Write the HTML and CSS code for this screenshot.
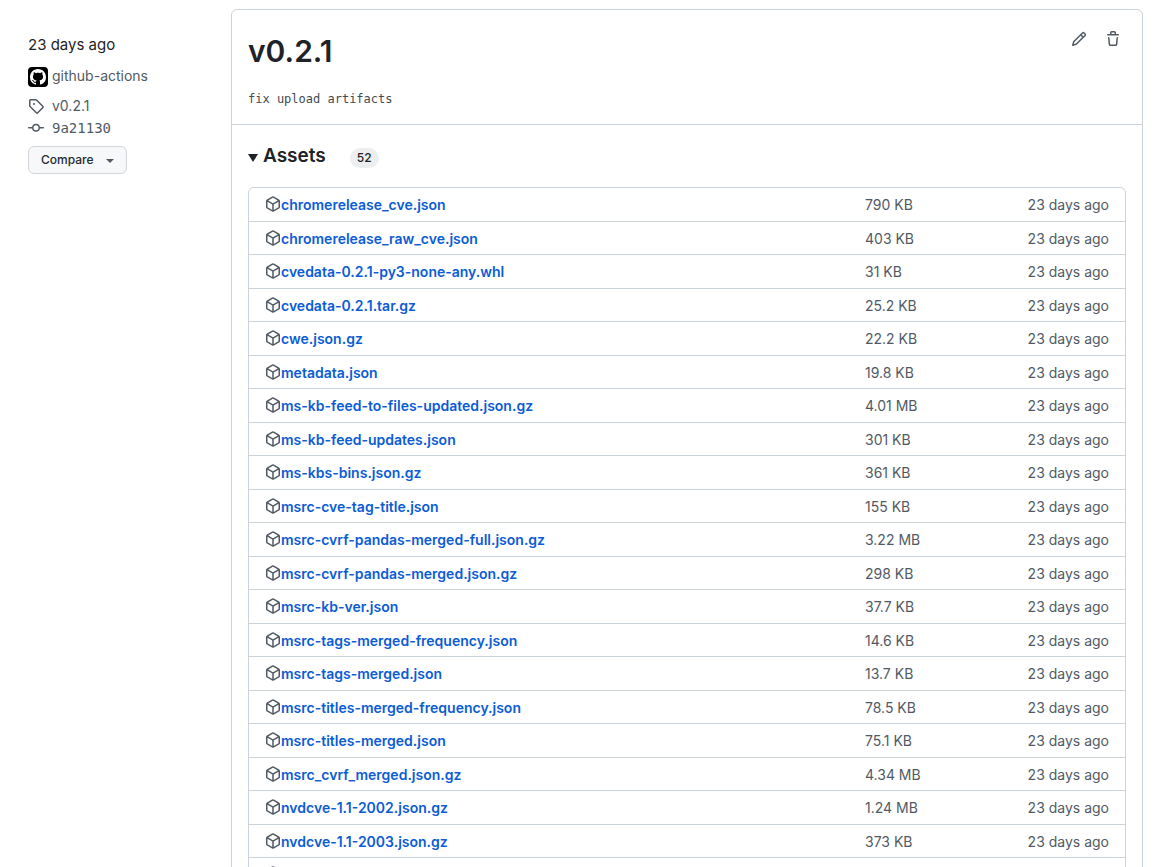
FILE: index.html
```html
<!DOCTYPE html>
<html lang="en">
<head>
<meta charset="utf-8">
<meta name="viewport" content="width=device-width, initial-scale=1">
<title>Release v0.2.1</title>
<link rel="stylesheet" href="styles.css">
</head>
<body>
<svg class="sprite" aria-hidden="true">
  <symbol id="package" viewBox="0 0 16 16"><path d="m8.878.392 5.25 3.045c.54.314.872.89.872 1.514v6.098a1.75 1.75 0 0 1-.872 1.514l-5.25 3.045a1.75 1.75 0 0 1-1.756 0l-5.25-3.045A1.75 1.75 0 0 1 1 11.049V4.951c0-.624.332-1.201.872-1.514L7.122.392a1.75 1.75 0 0 1 1.756 0ZM7.875 1.69l-4.63 2.685L8 7.133l4.755-2.758-4.63-2.685a.248.248 0 0 0-.25 0ZM2.5 5.677v5.372c0 .09.047.171.125.216l4.625 2.683V8.432Zm6.25 8.271 4.625-2.683a.25.25 0 0 0 .125-.216V5.677L8.75 8.432Z"/></symbol>
</svg>
<main class="release">
  <aside class="meta">
    <p class="meta-date">23 days ago</p>
    <a class="meta-author" href="#author">
      <span class="avatar"><svg viewBox="0 0 16 16" aria-hidden="true"><path d="M8 0c4.42 0 8 3.58 8 8a8.013 8.013 0 0 1-5.45 7.59c-.4.08-.55-.17-.55-.38 0-.27.01-1.13.01-2.2 0-.75-.25-1.23-.54-1.48 1.78-.2 3.65-.88 3.65-3.95 0-.88-.31-1.59-.82-2.15.08-.2.36-1.02-.08-2.12 0 0-.67-.22-2.2.82-.64-.18-1.32-.27-2-.27-.68 0-1.36.09-2 .27-1.53-1.03-2.2-.82-2.2-.82-.44 1.1-.16 1.92-.08 2.12-.51.56-.82 1.28-.82 2.15 0 3.06 1.86 3.75 3.64 3.95-.23.2-.44.55-.51 1.07-.46.21-1.61.55-2.33-.66-.15-.24-.6-.83-1.23-.82-.67.01-.27.38.01.53.34.19.73.9.82 1.13.16.45.68 1.31 2.69.94 0 .67.01 1.3.01 1.49 0 .21-.15.45-.55.38A7.995 7.995 0 0 1 0 8c0-4.42 3.58-8 8-8Z"/></svg></span>
      github-actions
    </a>
    <a class="meta-link" href="#tag">
      <svg class="icon" viewBox="0 0 16 16" aria-hidden="true"><path d="M1 7.775V2.75C1 1.784 1.784 1 2.75 1h5.025c.464 0 .91.184 1.238.513l6.25 6.25a1.75 1.75 0 0 1 0 2.474l-5.026 5.026a1.75 1.75 0 0 1-2.474 0l-6.25-6.25A1.752 1.752 0 0 1 1 7.775Zm1.5 0c0 .066.026.13.073.177l6.25 6.25a.25.25 0 0 0 .354 0l5.025-5.025a.25.25 0 0 0 0-.354l-6.25-6.25a.25.25 0 0 0-.177-.073H2.75a.25.25 0 0 0-.25.25ZM6 5a1 1 0 1 1 0 2 1 1 0 0 1 0-2Z"/></svg>
      v0.2.1
    </a>
    <a class="meta-link meta-commit" href="#commit">
      <svg class="icon" viewBox="0 0 16 16" aria-hidden="true"><path d="M11.93 8.5a4.002 4.002 0 0 1-7.86 0H.75a.75.75 0 0 1 0-1.5h3.32a4.002 4.002 0 0 1 7.86 0h3.32a.75.75 0 0 1 0 1.5Zm-1.43-.75a2.5 2.5 0 1 0-5 0 2.5 2.5 0 0 0 5 0Z"/></svg>
      9a21130
    </a>
    <button class="compare" type="button">Compare <span class="caret"></span></button>
  </aside>
  <section class="card">
    <header class="card-header">
      <div class="title-row">
        <h1 class="title">v0.2.1</h1>
        <div class="actions">
          <button class="icon-button" type="button" aria-label="Edit"><svg class="icon" viewBox="0 0 16 16" aria-hidden="true"><path d="M11.013 1.427a1.75 1.75 0 0 1 2.474 0l1.086 1.086a1.75 1.75 0 0 1 0 2.474l-8.61 8.61c-.21.21-.47.364-.756.445l-3.251.93a.75.75 0 0 1-.927-.928l.929-3.25c.081-.286.235-.547.445-.758l8.61-8.61Zm.176 4.823L9.75 4.81l-6.286 6.287a.253.253 0 0 0-.064.108l-.558 1.953 1.953-.558a.253.253 0 0 0 .108-.064Zm1.238-3.763a.25.25 0 0 0-.354 0L10.811 3.75l1.439 1.44 1.263-1.263a.25.25 0 0 0 0-.354Z"/></svg></button>
          <button class="icon-button" type="button" aria-label="Delete"><svg class="icon" viewBox="0 0 16 16" aria-hidden="true"><path d="M11 1.75V3h2.25a.75.75 0 0 1 0 1.5H2.75a.75.75 0 0 1 0-1.5H5V1.75C5 .784 5.784 0 6.75 0h2.5C10.216 0 11 .784 11 1.75ZM4.496 6.675l.66 6.6a.25.25 0 0 0 .249.225h5.19a.25.25 0 0 0 .249-.225l.66-6.6a.75.75 0 0 1 1.492.149l-.66 6.6A1.748 1.748 0 0 1 10.595 15h-5.19a1.75 1.75 0 0 1-1.741-1.575l-.66-6.6a.75.75 0 1 1 1.492-.15ZM6.5 1.75V3h3V1.75a.25.25 0 0 0-.25-.25h-2.5a.25.25 0 0 0-.25.25Z"/></svg></button>
        </div>
      </div>
      <p class="message">fix upload artifacts</p>
    </header>
    <details class="assets" open>
      <summary class="assets-summary"><span class="triangle"></span><h2 class="assets-title">Assets</h2><span class="count">52</span></summary>
      <div class="table-box">
        <table class="files">
          <tbody>
            <tr><td class="name"><span class="file"><svg class="icon"><use href="#package"/></svg><a href="#f">chromerelease_cve.json</a></span></td><td class="size">790 KB</td><td class="date">23 days ago</td></tr>
            <tr><td class="name"><span class="file"><svg class="icon"><use href="#package"/></svg><a href="#f">chromerelease_raw_cve.json</a></span></td><td class="size">403 KB</td><td class="date">23 days ago</td></tr>
            <tr><td class="name"><span class="file"><svg class="icon"><use href="#package"/></svg><a href="#f">cvedata-0.2.1-py3-none-any.whl</a></span></td><td class="size">31 KB</td><td class="date">23 days ago</td></tr>
            <tr><td class="name"><span class="file"><svg class="icon"><use href="#package"/></svg><a href="#f">cvedata-0.2.1.tar.gz</a></span></td><td class="size">25.2 KB</td><td class="date">23 days ago</td></tr>
            <tr><td class="name"><span class="file"><svg class="icon"><use href="#package"/></svg><a href="#f">cwe.json.gz</a></span></td><td class="size">22.2 KB</td><td class="date">23 days ago</td></tr>
            <tr><td class="name"><span class="file"><svg class="icon"><use href="#package"/></svg><a href="#f">metadata.json</a></span></td><td class="size">19.8 KB</td><td class="date">23 days ago</td></tr>
            <tr><td class="name"><span class="file"><svg class="icon"><use href="#package"/></svg><a href="#f">ms-kb-feed-to-files-updated.json.gz</a></span></td><td class="size">4.01 MB</td><td class="date">23 days ago</td></tr>
            <tr><td class="name"><span class="file"><svg class="icon"><use href="#package"/></svg><a href="#f">ms-kb-feed-updates.json</a></span></td><td class="size">301 KB</td><td class="date">23 days ago</td></tr>
            <tr><td class="name"><span class="file"><svg class="icon"><use href="#package"/></svg><a href="#f">ms-kbs-bins.json.gz</a></span></td><td class="size">361 KB</td><td class="date">23 days ago</td></tr>
            <tr><td class="name"><span class="file"><svg class="icon"><use href="#package"/></svg><a href="#f">msrc-cve-tag-title.json</a></span></td><td class="size">155 KB</td><td class="date">23 days ago</td></tr>
            <tr><td class="name"><span class="file"><svg class="icon"><use href="#package"/></svg><a href="#f">msrc-cvrf-pandas-merged-full.json.gz</a></span></td><td class="size">3.22 MB</td><td class="date">23 days ago</td></tr>
            <tr><td class="name"><span class="file"><svg class="icon"><use href="#package"/></svg><a href="#f">msrc-cvrf-pandas-merged.json.gz</a></span></td><td class="size">298 KB</td><td class="date">23 days ago</td></tr>
            <tr><td class="name"><span class="file"><svg class="icon"><use href="#package"/></svg><a href="#f">msrc-kb-ver.json</a></span></td><td class="size">37.7 KB</td><td class="date">23 days ago</td></tr>
            <tr><td class="name"><span class="file"><svg class="icon"><use href="#package"/></svg><a href="#f">msrc-tags-merged-frequency.json</a></span></td><td class="size">14.6 KB</td><td class="date">23 days ago</td></tr>
            <tr><td class="name"><span class="file"><svg class="icon"><use href="#package"/></svg><a href="#f">msrc-tags-merged.json</a></span></td><td class="size">13.7 KB</td><td class="date">23 days ago</td></tr>
            <tr><td class="name"><span class="file"><svg class="icon"><use href="#package"/></svg><a href="#f">msrc-titles-merged-frequency.json</a></span></td><td class="size">78.5 KB</td><td class="date">23 days ago</td></tr>
            <tr><td class="name"><span class="file"><svg class="icon"><use href="#package"/></svg><a href="#f">msrc-titles-merged.json</a></span></td><td class="size">75.1 KB</td><td class="date">23 days ago</td></tr>
            <tr><td class="name"><span class="file"><svg class="icon"><use href="#package"/></svg><a href="#f">msrc_cvrf_merged.json.gz</a></span></td><td class="size">4.34 MB</td><td class="date">23 days ago</td></tr>
            <tr><td class="name"><span class="file"><svg class="icon"><use href="#package"/></svg><a href="#f">nvdcve-1.1-2002.json.gz</a></span></td><td class="size">1.24 MB</td><td class="date">23 days ago</td></tr>
            <tr><td class="name"><span class="file"><svg class="icon"><use href="#package"/></svg><a href="#f">nvdcve-1.1-2003.json.gz</a></span></td><td class="size">373 KB</td><td class="date">23 days ago</td></tr>
            <tr><td class="name"><span class="file"><svg class="icon"><use href="#package"/></svg></span></td><td class="size"></td><td class="date"></td></tr>
          </tbody>
        </table>
      </div>
    </details>
  </section>
</main>
</body>
</html>
```
FILE: styles.css
```css
* { box-sizing: border-box; }

body {
  margin: 0;
  background: #fff;
  color: #1f2328;
  font: 14px/20px Inter, "Liberation Sans", sans-serif;
}

h1, h2, p { margin: 0; }
a { color: inherit; text-decoration: none; }
button { font: inherit; color: inherit; cursor: pointer; }

.sprite { display: none; }

.icon {
  display: block;
  flex: none;
  width: 16px;
  height: 16px;
  fill: #515a64;
}

.release {
  display: grid;
  grid-template-columns: 203px minmax(0, 1fr);
  height: 100vh;
  overflow: hidden;
  padding: 9px 32px 0 28px;
}

.meta {
  display: flex;
  flex-direction: column;
  align-items: flex-start;
  padding-top: 24px;
  color: #515a64;
}

.meta-date {
  margin-bottom: 8px;
  color: #1f2328;
  font-size: 15px;
  line-height: 24px;
}

.meta-author {
  display: flex;
  align-items: center;
  gap: 4px;
  margin-bottom: 8px;
}

.avatar {
  display: grid;
  align-items: end;
  width: 20px;
  height: 22px;
}

.avatar svg {
  width: 20px;
  height: 20px;
  padding: 2px;
  border-radius: 4px;
  background: #000;
  fill: #fff;
}

.meta-link {
  display: flex;
  align-items: center;
  gap: 8px;
  line-height: 22px;
}

.meta-commit { font-family: "DejaVu Sans Mono", "Liberation Mono", monospace; }

.compare {
  display: flex;
  align-items: center;
  gap: 12px;
  height: 28px;
  margin-top: 7px;
  padding: 0 12px;
  border: 1px solid #d3d6da;
  border-radius: 6px;
  background: #f6f8fa;
  color: #25292e;
  font-size: 12px;
  font-weight: 500;
}

.caret {
  margin-top: 2px;
  border: 4px solid transparent;
  border-top-color: #515a64;
  border-bottom: 0;
}

.card {
  min-height: 100vh;
  border: 1px solid #cdd3dc;
  border-radius: 6px;
}

.card-header {
  padding: 17px 16px 16px;
  border-bottom: 1px solid #cdd3dc;
}

.title-row {
  display: flex;
  justify-content: space-between;
}

.title {
  font-size: 30px;
  font-weight: 600;
  line-height: 48px;
}

.actions {
  display: flex;
  align-items: flex-start;
  gap: 2px;
  margin-right: -3px;
}

.icon-button {
  padding: 4px 8px;
  border: 0;
  background: none;
}

.message {
  margin-top: 15px;
  color: #424a53;
  font: 12px/18px "DejaVu Sans Mono", "Liberation Mono", monospace;
}

.assets { padding: 16px; }

.assets-summary {
  display: flex;
  align-items: center;
  gap: 5px;
  margin-bottom: 16px;
  list-style: none;
  cursor: pointer;
}

.triangle {
  margin-top: 4px;
  border: 5px solid transparent;
  border-top: 8px solid #1f2328;
  border-bottom: 0;
}

.assets-title {
  font-size: 19px;
  font-weight: 600;
  line-height: 30px;
}

.count {
  margin: 4px 0 0 19px;
  padding: 0 7px;
  border-radius: 10px;
  background: #eceef0;
  font-size: 12px;
  font-weight: 500;
}

.table-box {
  border: 1px solid #cdd3dc;
  border-radius: 6px;
}

.files {
  width: 100%;
  border-spacing: 0;
  table-layout: fixed;
}

.files td {
  height: 33px;
  padding: 0;
  color: #515a64;
}

.files tr + tr td { border-top: 1px solid #cdd3dc; }
.files tr:nth-child(even) td { padding-top: 2px; }
.files tr:nth-child(odd) + tr td { height: 33px; }
.files tr:nth-child(even) + tr td { height: 34px; }

.files .name { padding-left: 16px; }
.files .size { width: 130px; }
.files .date { width: 130px; padding-right: 16px; text-align: right; }

.file {
  display: flex;
  align-items: center;
}

.file .icon { margin-bottom: 2px; }

.file a {
  color: #0b5cd5;
  font-weight: 600;
}
```
